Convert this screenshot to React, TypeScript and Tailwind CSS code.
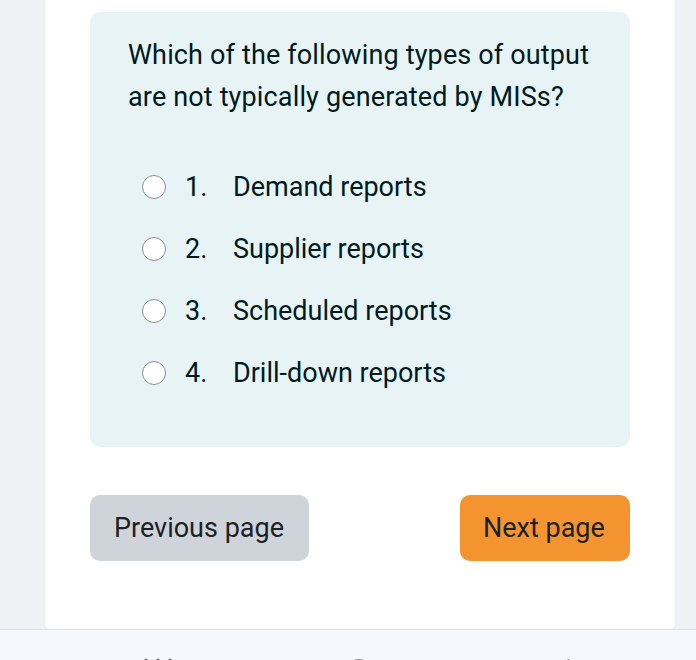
const options = ['Demand reports', 'Supplier reports', 'Scheduled reports', 'Drill-down reports'];

function Radio() {
  return <span className="ml-[14px] mr-[19px] h-6 w-6 shrink-0 rounded-full border-[1.5px] border-[#8a8d91] bg-white" />;
}

export default function App() {
  return (
    <div className="flex h-[660px] w-[696px] flex-col overflow-hidden bg-[#eff1f5] font-['Roboto',sans-serif]">
      {/* card */}
      <div className="ml-[45px] h-[629px] w-[630px] shrink-0 rounded-b-[5px] bg-white pt-3">
        <div className="ml-[45px] w-[540px] rounded-[10px] bg-[#e7f3f5] px-[38px] pt-[22px] pb-[43px] text-[27px] text-[#001a1e]">
          <p className="leading-[42px] tracking-[0.15px]">
            Which of the following types of output are not typically generated by MISs?
          </p>
          <div className="mt-[38px]">
            {options.map((o, i) => (
              <label key={o} className="flex h-[62px] items-center">
                <Radio />
                <span className="w-[48px] shrink-0">{i + 1}.</span>
                <span>{o}</span>
              </label>
            ))}
          </div>
        </div>

        <div className="ml-[45px] mt-[48px] flex w-[540px] justify-between text-[27px] text-[#1d2125]">
          <button className="h-[66px] w-[219px] rounded-[10px] bg-[#ced4da] pl-6 text-left">Previous page</button>
          <button className="h-[66px] w-[170px] rounded-[10px] bg-[#f39431] pl-[23px] text-left">Next page</button>
        </div>
      </div>

      {/* footer nav, mostly below the fold */}
      <div className="flex flex-1 border-t border-[#dee2e6] bg-[#f5f8fc] pt-[26px]">
        <svg className="ml-[144px] h-[12px] w-[30px] shrink-0" viewBox="0 0 30 12">
          <circle cx="2" cy="4" r="1.6" fill="#6a6e73" />
          <circle cx="14" cy="4" r="1.6" fill="#6a6e73" />
          <circle cx="26" cy="4" r="1.6" fill="#6a6e73" />
        </svg>
        <svg className="ml-[173px] h-[12px] w-[24px] shrink-0" viewBox="0 0 24 12">
          <ellipse cx="12" cy="12" rx="11" ry="9" fill="#8a8d91" />
        </svg>
        <svg className="ml-[191px] h-[12px] w-[12px] shrink-0" viewBox="0 0 12 12">
          <path d="M6 3 L7 3 L7 12 L5 12 L5 4 Z" fill="#7a7e83" />
        </svg>
      </div>
    </div>
  );
}
